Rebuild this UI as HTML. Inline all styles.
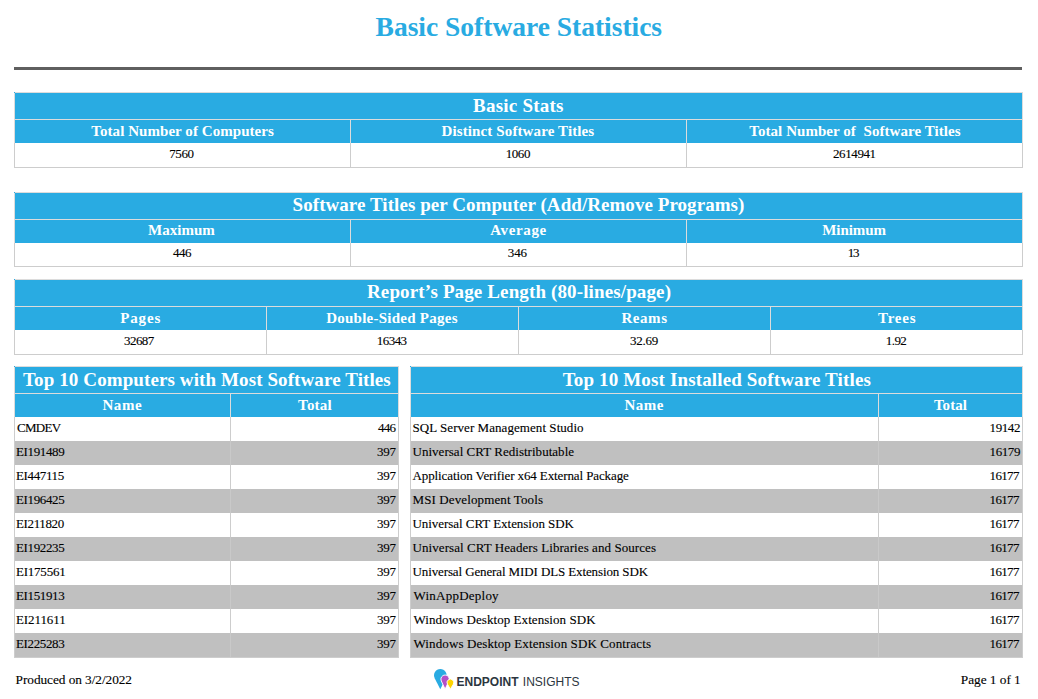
<!DOCTYPE html><html><head><meta charset="utf-8"><title>Basic Software Statistics</title><style>
html,body{margin:0;padding:0;background:#fff;width:1038px;height:699px;overflow:hidden;position:relative;font-family:"Liberation Serif",serif}
i{position:absolute;display:block}
div{position:absolute;white-space:pre;line-height:40px;height:40px}
.main{color:#29abe2} .ttl,.hdr{color:#fff} .dat,.ftr{color:#000}
.main{font-family:'Liberation Serif',serif;font-weight:bold;font-size:27.5px}
.ttl{font-family:'Liberation Serif',serif;font-weight:bold;font-size:19px}
.hdr{font-family:'Liberation Serif',serif;font-weight:bold;font-size:15px}
.dat{font-family:'Liberation Serif',serif;font-size:13px;-webkit-text-stroke:0.12px #000}
.ftr{font-family:'Liberation Serif',serif;font-size:13.33px;-webkit-text-stroke:0.12px #000}
</style></head><body>
<i style="left:14px;top:67px;width:1008px;height:3px;background:#5f5f5f"></i>
<i style="left:14px;top:92px;width:1009px;height:51px;background:#dcdcdc"></i>
<i style="left:15px;top:93px;width:1007px;height:26px;background:#29abe2"></i>
<i style="left:15px;top:120px;width:1007px;height:23px;background:#29abe2"></i>
<i style="left:14px;top:92px;width:1px;height:1px;background:#29abe2"></i>
<i style="left:14px;top:143px;width:1009px;height:25px;background:#cdcdcd"></i>
<i style="left:15px;top:143px;width:1007px;height:24px;background:#fff"></i>
<i style="left:350px;top:120px;width:1px;height:23px;background:#dcdcdc"></i>
<i style="left:350px;top:143px;width:1px;height:24px;background:#cdcdcd"></i>
<i style="left:686px;top:120px;width:1px;height:23px;background:#dcdcdc"></i>
<i style="left:686px;top:143px;width:1px;height:24px;background:#cdcdcd"></i>
<i style="left:14px;top:192px;width:1009px;height:51px;background:#dcdcdc"></i>
<i style="left:15px;top:193px;width:1007px;height:26px;background:#29abe2"></i>
<i style="left:15px;top:220px;width:1007px;height:23px;background:#29abe2"></i>
<i style="left:14px;top:192px;width:1px;height:1px;background:#29abe2"></i>
<i style="left:14px;top:243px;width:1009px;height:24px;background:#cdcdcd"></i>
<i style="left:15px;top:243px;width:1007px;height:23px;background:#fff"></i>
<i style="left:350px;top:220px;width:1px;height:23px;background:#dcdcdc"></i>
<i style="left:350px;top:243px;width:1px;height:23px;background:#cdcdcd"></i>
<i style="left:686px;top:220px;width:1px;height:23px;background:#dcdcdc"></i>
<i style="left:686px;top:243px;width:1px;height:23px;background:#cdcdcd"></i>
<i style="left:14px;top:279px;width:1009px;height:51px;background:#dcdcdc"></i>
<i style="left:15px;top:280px;width:1007px;height:26px;background:#29abe2"></i>
<i style="left:15px;top:307px;width:1007px;height:23px;background:#29abe2"></i>
<i style="left:14px;top:279px;width:1px;height:1px;background:#29abe2"></i>
<i style="left:14px;top:330px;width:1009px;height:25px;background:#cdcdcd"></i>
<i style="left:15px;top:330px;width:1007px;height:24px;background:#fff"></i>
<i style="left:266px;top:307px;width:1px;height:23px;background:#dcdcdc"></i>
<i style="left:266px;top:330px;width:1px;height:24px;background:#cdcdcd"></i>
<i style="left:518px;top:307px;width:1px;height:23px;background:#dcdcdc"></i>
<i style="left:518px;top:330px;width:1px;height:24px;background:#cdcdcd"></i>
<i style="left:770px;top:307px;width:1px;height:23px;background:#dcdcdc"></i>
<i style="left:770px;top:330px;width:1px;height:24px;background:#cdcdcd"></i>
<i style="left:14px;top:366px;width:385px;height:51px;background:#dcdcdc"></i>
<i style="left:15px;top:367px;width:383px;height:26px;background:#29abe2"></i>
<i style="left:15px;top:394px;width:383px;height:23px;background:#29abe2"></i>
<i style="left:14px;top:366px;width:1px;height:1px;background:#29abe2"></i>
<i style="left:230px;top:394px;width:1px;height:23px;background:#dcdcdc"></i>
<i style="left:14px;top:417px;width:385px;height:241px;background:#cdcdcd"></i>
<i style="left:15px;top:417px;width:383px;height:24px;background:#fff"></i>
<i style="left:230px;top:417px;width:1px;height:24px;background:#cdcdcd"></i>
<i style="left:15px;top:441px;width:383px;height:24px;background:#c0c0c0"></i>
<i style="left:230px;top:441px;width:1px;height:24px;background:#c9c9c9"></i>
<i style="left:15px;top:465px;width:383px;height:24px;background:#fff"></i>
<i style="left:230px;top:465px;width:1px;height:24px;background:#cdcdcd"></i>
<i style="left:15px;top:489px;width:383px;height:24px;background:#c0c0c0"></i>
<i style="left:230px;top:489px;width:1px;height:24px;background:#c9c9c9"></i>
<i style="left:15px;top:513px;width:383px;height:24px;background:#fff"></i>
<i style="left:230px;top:513px;width:1px;height:24px;background:#cdcdcd"></i>
<i style="left:15px;top:537px;width:383px;height:24px;background:#c0c0c0"></i>
<i style="left:230px;top:537px;width:1px;height:24px;background:#c9c9c9"></i>
<i style="left:15px;top:561px;width:383px;height:24px;background:#fff"></i>
<i style="left:230px;top:561px;width:1px;height:24px;background:#cdcdcd"></i>
<i style="left:15px;top:585px;width:383px;height:24px;background:#c0c0c0"></i>
<i style="left:230px;top:585px;width:1px;height:24px;background:#c9c9c9"></i>
<i style="left:15px;top:609px;width:383px;height:24px;background:#fff"></i>
<i style="left:230px;top:609px;width:1px;height:24px;background:#cdcdcd"></i>
<i style="left:15px;top:633px;width:383px;height:24px;background:#c0c0c0"></i>
<i style="left:230px;top:633px;width:1px;height:24px;background:#c9c9c9"></i>
<i style="left:410px;top:366px;width:613px;height:51px;background:#dcdcdc"></i>
<i style="left:411px;top:367px;width:611px;height:26px;background:#29abe2"></i>
<i style="left:411px;top:394px;width:611px;height:23px;background:#29abe2"></i>
<i style="left:410px;top:366px;width:1px;height:1px;background:#29abe2"></i>
<i style="left:878px;top:394px;width:1px;height:23px;background:#dcdcdc"></i>
<i style="left:410px;top:417px;width:613px;height:241px;background:#cdcdcd"></i>
<i style="left:411px;top:417px;width:611px;height:24px;background:#fff"></i>
<i style="left:878px;top:417px;width:1px;height:24px;background:#cdcdcd"></i>
<i style="left:411px;top:441px;width:611px;height:24px;background:#c0c0c0"></i>
<i style="left:878px;top:441px;width:1px;height:24px;background:#c9c9c9"></i>
<i style="left:411px;top:465px;width:611px;height:24px;background:#fff"></i>
<i style="left:878px;top:465px;width:1px;height:24px;background:#cdcdcd"></i>
<i style="left:411px;top:489px;width:611px;height:24px;background:#c0c0c0"></i>
<i style="left:878px;top:489px;width:1px;height:24px;background:#c9c9c9"></i>
<i style="left:411px;top:513px;width:611px;height:24px;background:#fff"></i>
<i style="left:878px;top:513px;width:1px;height:24px;background:#cdcdcd"></i>
<i style="left:411px;top:537px;width:611px;height:24px;background:#c0c0c0"></i>
<i style="left:878px;top:537px;width:1px;height:24px;background:#c9c9c9"></i>
<i style="left:411px;top:561px;width:611px;height:24px;background:#fff"></i>
<i style="left:878px;top:561px;width:1px;height:24px;background:#cdcdcd"></i>
<i style="left:411px;top:585px;width:611px;height:24px;background:#c0c0c0"></i>
<i style="left:878px;top:585px;width:1px;height:24px;background:#c9c9c9"></i>
<i style="left:411px;top:609px;width:611px;height:24px;background:#fff"></i>
<i style="left:878px;top:609px;width:1px;height:24px;background:#cdcdcd"></i>
<i style="left:411px;top:633px;width:611px;height:24px;background:#c0c0c0"></i>
<i style="left:878px;top:633px;width:1px;height:24px;background:#c9c9c9"></i>
<div class="main" style="left:375.6px;top:6.8px;letter-spacing:-0.009px">Basic Software Statistics</div>
<div class="ttl" style="left:473.1px;top:85.9px;letter-spacing:0.22px">Basic Stats</div>
<div class="hdr" style="left:91.3px;top:111px;letter-spacing:0.054px">Total Number of Computers</div>
<div class="hdr" style="left:441.5px;top:111px;letter-spacing:0.118px">Distinct Software Titles</div>
<div class="hdr" style="left:749.3px;top:111px;letter-spacing:0.051px">Total Number of  Software Titles</div>
<div class="dat" style="left:169.2px;top:134px;letter-spacing:-0.367px">7560</div>
<div class="dat" style="left:505.8px;top:134px;letter-spacing:-0.466px">1060</div>
<div class="dat" style="left:833px;top:134px;letter-spacing:-0.401px">2614941</div>
<div class="ttl" style="left:292.6px;top:184.7px;letter-spacing:0.055px">Software Titles per Computer (Add/Remove Programs)</div>
<div class="hdr" style="left:148.1px;top:210px;letter-spacing:0.017px">Maximum</div>
<div class="hdr" style="left:490.2px;top:210px;letter-spacing:0.633px">Average</div>
<div class="hdr" style="left:822.3px;top:210px;letter-spacing:-0.083px">Minimum</div>
<div class="dat" style="left:172.9px;top:232.7px;letter-spacing:-0.5px">446</div>
<div class="dat" style="left:507.7px;top:232.7px;letter-spacing:-0.05px">346</div>
<div class="dat" style="left:847.7px;top:232.7px;letter-spacing:-1.2px">13</div>
<div class="ttl" style="left:367.0px;top:271.9px;letter-spacing:0.126px">Report’s Page Length (80-lines/page)</div>
<div class="hdr" style="left:120.2px;top:298px;letter-spacing:0.875px">Pages</div>
<div class="hdr" style="left:326.2px;top:298px;letter-spacing:0.248px">Double-Sided Pages</div>
<div class="hdr" style="left:621.4px;top:298px;letter-spacing:0.575px">Reams</div>
<div class="hdr" style="left:878px;top:298px;letter-spacing:0.775px">Trees</div>
<div class="dat" style="left:124px;top:321px;letter-spacing:-0.55px">32687</div>
<div class="dat" style="left:376.8px;top:321px;letter-spacing:-0.55px">16343</div>
<div class="dat" style="left:630px;top:321px;letter-spacing:-0.25px">32.69</div>
<div class="dat" style="left:885.8px;top:321px;letter-spacing:-0.567px">1.92</div>
<div class="ttl" style="left:23.1px;top:360px;letter-spacing:0.102px">Top 10 Computers with Most Software Titles</div>
<div class="hdr" style="left:102.4px;top:384.7px;letter-spacing:0.6px">Name</div>
<div class="hdr" style="left:298.1px;top:384.7px;letter-spacing:0.175px">Total</div>
<div class="ttl" style="left:562.7px;top:360px;letter-spacing:0.149px">Top 10 Most Installed Software Titles</div>
<div class="hdr" style="left:624.4px;top:384.7px;letter-spacing:0.5px">Name</div>
<div class="hdr" style="left:933.9px;top:384.7px;letter-spacing:0.075px">Total</div>
<div class="ftr" style="left:15.6px;top:659.7px;letter-spacing:-0.068px">Produced on 3/2/2022</div>
<div class="ftr" style="left:960.8px;top:659.8px;letter-spacing:-0.04px">Page 1 of 1</div>
<div class="dat" style="left:17.0px;top:408px;letter-spacing:-0.725px">CMDEV</div>
<div class="dat" style="left:378.0px;top:408px;letter-spacing:-0.8px">446</div>
<div class="dat" style="left:16.0px;top:432px;letter-spacing:-0.372px">EI191489</div>
<div class="dat" style="left:377.0px;top:432px;letter-spacing:-0.3px">397</div>
<div class="dat" style="left:16.0px;top:456px;letter-spacing:-0.372px">EI447115</div>
<div class="dat" style="left:377.0px;top:456px;letter-spacing:-0.3px">397</div>
<div class="dat" style="left:16.0px;top:480px;letter-spacing:-0.372px">EI196425</div>
<div class="dat" style="left:377.0px;top:480px;letter-spacing:-0.3px">397</div>
<div class="dat" style="left:16.0px;top:504px;letter-spacing:-0.372px">EI211820</div>
<div class="dat" style="left:377.0px;top:504px;letter-spacing:-0.3px">397</div>
<div class="dat" style="left:16.0px;top:528px;letter-spacing:-0.372px">EI192235</div>
<div class="dat" style="left:377.0px;top:528px;letter-spacing:-0.3px">397</div>
<div class="dat" style="left:16.0px;top:552px;letter-spacing:-0.229px">EI175561</div>
<div class="dat" style="left:377.0px;top:552px;letter-spacing:-0.3px">397</div>
<div class="dat" style="left:16.0px;top:576px;letter-spacing:-0.372px">EI151913</div>
<div class="dat" style="left:377.0px;top:576px;letter-spacing:-0.3px">397</div>
<div class="dat" style="left:16.0px;top:600px;letter-spacing:-0.086px">EI211611</div>
<div class="dat" style="left:377.0px;top:600px;letter-spacing:-0.3px">397</div>
<div class="dat" style="left:16.0px;top:624px;letter-spacing:-0.372px">EI225283</div>
<div class="dat" style="left:377.0px;top:624px;letter-spacing:-0.3px">397</div>
<div class="dat" style="left:412.5px;top:408px;letter-spacing:0.056px">SQL Server Management Studio</div>
<div class="dat" style="left:989.6px;top:408px;letter-spacing:-0.425px">19142</div>
<div class="dat" style="left:412.5px;top:432px;letter-spacing:0.029px">Universal CRT Redistributable</div>
<div class="dat" style="left:989.6px;top:432px;letter-spacing:-0.425px">16179</div>
<div class="dat" style="left:412.5px;top:456px;letter-spacing:-0.109px">Application Verifier x64 External Package</div>
<div class="dat" style="left:989.6px;top:456px;letter-spacing:-0.675px">16177</div>
<div class="dat" style="left:412.5px;top:480px;letter-spacing:0.12px">MSI Development Tools</div>
<div class="dat" style="left:989.6px;top:480px;letter-spacing:-0.675px">16177</div>
<div class="dat" style="left:412.5px;top:504px;letter-spacing:-0.042px">Universal CRT Extension SDK</div>
<div class="dat" style="left:989.6px;top:504px;letter-spacing:-0.675px">16177</div>
<div class="dat" style="left:412.5px;top:528px;letter-spacing:0.071px">Universal CRT Headers Libraries and Sources</div>
<div class="dat" style="left:989.6px;top:528px;letter-spacing:-0.675px">16177</div>
<div class="dat" style="left:412.5px;top:552px;letter-spacing:-0.115px">Universal General MIDI DLS Extension SDK</div>
<div class="dat" style="left:989.6px;top:552px;letter-spacing:-0.675px">16177</div>
<div class="dat" style="left:413.5px;top:576px;letter-spacing:0.236px">WinAppDeploy</div>
<div class="dat" style="left:989.6px;top:576px;letter-spacing:-0.675px">16177</div>
<div class="dat" style="left:413.5px;top:600px;letter-spacing:0.06px">Windows Desktop Extension SDK</div>
<div class="dat" style="left:989.6px;top:600px;letter-spacing:-0.675px">16177</div>
<div class="dat" style="left:413.5px;top:624px;letter-spacing:0.105px">Windows Desktop Extension SDK Contracts</div>
<div class="dat" style="left:989.6px;top:624px;letter-spacing:-0.675px">16177</div>
<svg style="position:absolute;left:428px;top:664px" width="30" height="30" viewBox="0 0 30 30">
<path d="M12.30 25.20 L17.92 14.16 A6.30 6.30 0 1 0 6.68 14.16 Z" fill="#29abe2"/>
<path d="M17.10 25.20 L20.91 16.96 A4.20 4.20 0 1 0 13.29 16.96 Z" fill="#b44fc8" stroke="#fff" stroke-width="0.9"/>
<path d="M22.40 25.20 L25.33 20.23 A3.40 3.40 0 1 0 19.47 20.23 Z" fill="#ffd400" stroke="#fff" stroke-width="0.9"/>
</svg>
<div style="left:456.5px;top:662px;font-family:'Liberation Sans',sans-serif;font-size:12px;color:#2c3640;word-spacing:1px"><b>ENDPOINT</b> INSIGHTS</div>
</body></html>
